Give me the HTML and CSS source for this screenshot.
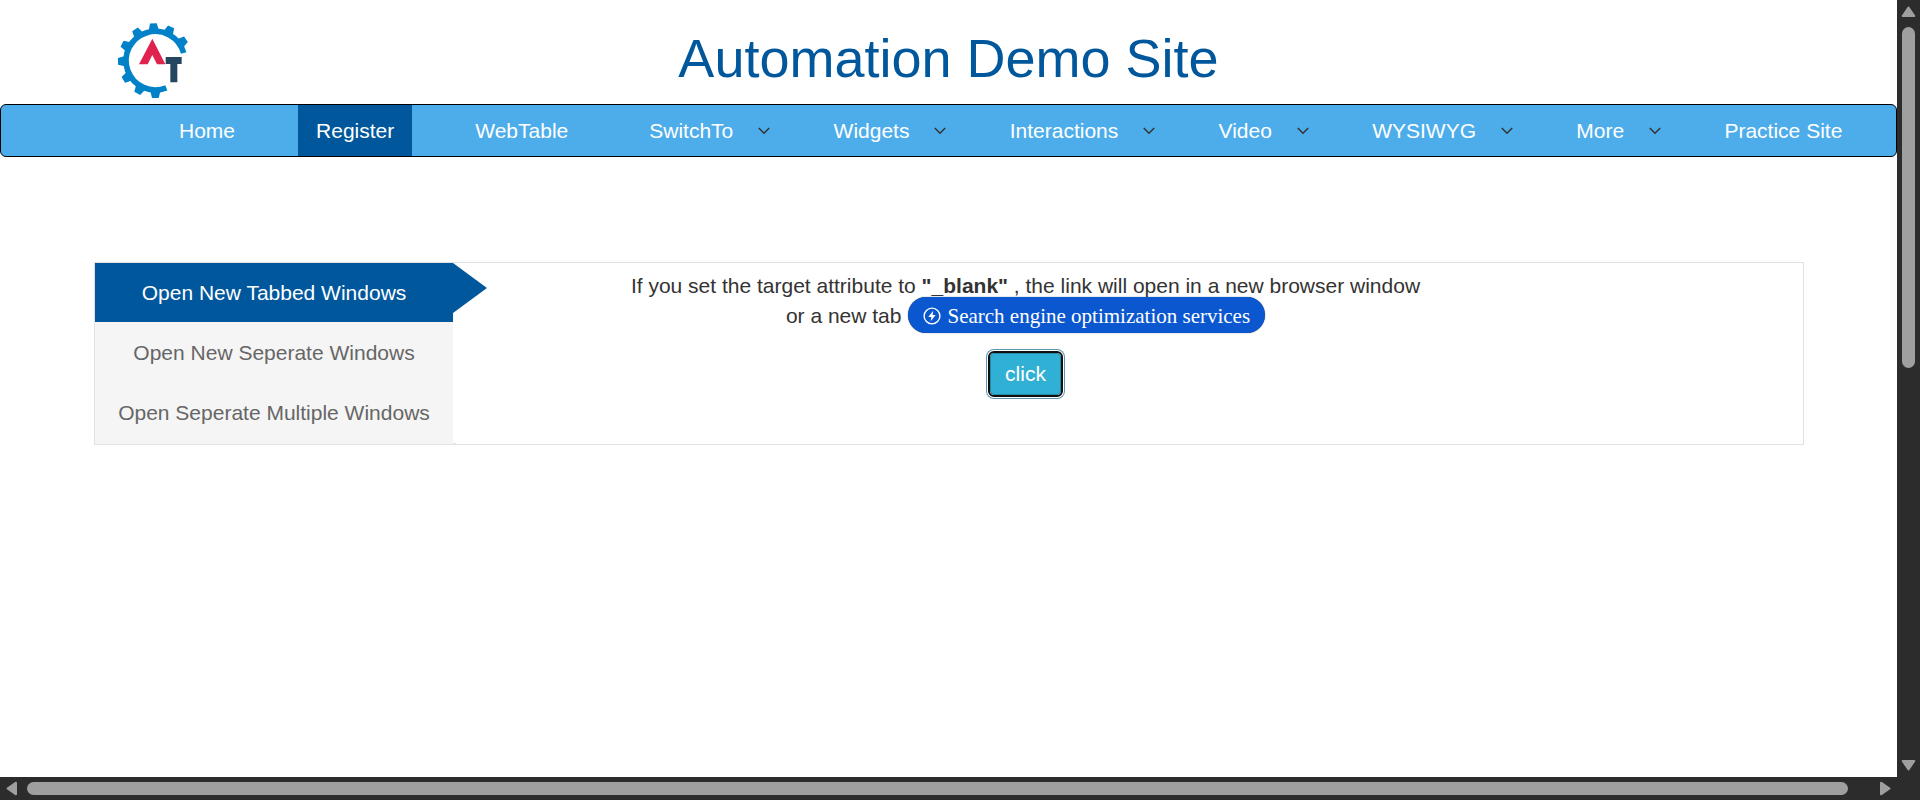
FILE: index.html
```html
<!DOCTYPE html>
<html lang="en">
<head>
<meta charset="utf-8">
<title>Automation Demo Site</title>
<link rel="stylesheet" href="styles.css">
</head>
<body>
<svg class="defs" width="0" height="0">
  <symbol id="chev" viewBox="0 0 12 8"><path d="M.8 1 6 6.2 11.2 1" fill="none" stroke="#333" stroke-width="1.5"/></symbol>
</svg>
<div class="page">
  <header class="header">
    <svg class="logo" viewBox="108 66 219 231">
      <path d="M311 159A88 88 0 1 0 259 263.6" fill="none" stroke="#0081c8" stroke-width="17"/>
      <g fill="#0081c8">
        <path id="tooth" d="M314 166 338 172V192L314 198Z" transform="rotate(-93 226 182)"/>
        <use href="#tooth" transform="rotate(28 226 182)"/>
        <use href="#tooth" transform="rotate(58 226 182)"/>
        <use href="#tooth" transform="rotate(-30 226 182)"/>
        <use href="#tooth" transform="rotate(-60 226 182)"/>
        <use href="#tooth" transform="rotate(-88 226 182)"/>
        <use href="#tooth" transform="rotate(-118 226 182)"/>
        <use href="#tooth" transform="rotate(-148 226 182)"/>
        <use href="#tooth" transform="rotate(-177 226 182)"/>
      </g>
      <path d="M217 116 256 193H231L217 165 203 193H177Z" fill="#e0234e"/>
      <path d="M257 171H305V192H292V247H271V192H257Z" fill="#24475f"/>
    </svg>
    <h1 class="title">Automation Demo Site</h1>
  </header>
  <nav class="nav">
    <a class="link">Home</a>
    <a class="link active">Register</a>
    <a class="link">WebTable</a>
    <div class="drop"><a class="link">SwitchTo</a><svg class="chev"><use href="#chev"/></svg></div>
    <div class="drop"><a class="link">Widgets</a><svg class="chev"><use href="#chev"/></svg></div>
    <div class="drop"><a class="link">Interactions</a><svg class="chev"><use href="#chev"/></svg></div>
    <div class="drop"><a class="link">Video</a><svg class="chev"><use href="#chev"/></svg></div>
    <div class="drop"><a class="link">WYSIWYG</a><svg class="chev"><use href="#chev"/></svg></div>
    <div class="drop"><a class="link">More</a><svg class="chev"><use href="#chev"/></svg></div>
    <a class="link">Practice Site</a>
  </nav>
  <main class="panel">
    <div class="tabs">
      <a class="tab current">Open New Tabbed Windows</a>
      <a class="tab">Open New Seperate Windows</a>
      <a class="tab">Open Seperate Multiple Windows</a>
    </div>
    <section class="content">
      <p class="text">If you set the target attribute to <b>"_blank"</b> , the link will open in a new browser window</p>
      <div class="row">
        <span class="text">or a new tab</span>
        <a class="pill"><svg class="bolt" viewBox="0 0 18 18"><circle cx="9" cy="9" r="7.9" fill="none" stroke="#fff" stroke-width="1.4"/><path d="M10.2 3.8 5.3 10H8.3L7.7 14.2 12.6 8H9.6Z" fill="#fff"/></svg>Search engine optimization services</a>
      </div>
      <button class="click">click</button>
    </section>
  </main>
</div>
<div class="vbar">
  <svg class="arrow" viewBox="0 0 15 12"><path d="M7.5 1.5 13.3 10H1.7Z"/></svg>
  <div class="vthumb"></div>
  <svg class="arrow down" viewBox="0 0 15 12"><path d="M7.5 10.5 13.3 2H1.7Z"/></svg>
</div>
<div class="hbar">
  <svg class="side" viewBox="0 0 12 15"><path d="M1.5 7.5 10 1.7V13.3Z"/></svg>
  <div class="hthumb"></div>
  <svg class="side right" viewBox="0 0 12 15"><path d="M10.5 7.5 2 1.7V13.3Z"/></svg>
</div>
</body>
</html>
```
FILE: styles.css
```css
* { box-sizing: border-box; }
body {
  margin: 0;
  width: 1920px;
  height: 800px;
  overflow: hidden;
  display: grid;
  grid-template: 777px 23px / 1897px 23px;
  background: #fff;
  color: #333;
  font: 21px/30px "Liberation Sans", Arial, sans-serif;
}
.defs { position: absolute; }
.page { overflow: hidden; }
.header {
  height: 104px;
  display: grid;
  grid-template-columns: 189px 1fr 189px;
}
.logo { width: 73px; height: 77px; margin: 22px 0 0 116px; }
.title {
  margin: 29px 0 0;
  text-align: center;
  font-size: 54px;
  line-height: 59px;
  font-weight: 400;
  color: #00579c;
}
.nav {
  height: 53px;
  display: flex;
  gap: 45px;
  padding-left: 160px;
  background: #4dadeb;
  border: 1px solid #000;
  border-radius: 6px;
  white-space: nowrap;
}
.link { padding: 11px 18px 0; color: #fff; }
.active { background: #00579c; }
.drop { display: flex; align-items: flex-start; }
.chev { width: 12px; height: 8px; margin: 22px .6px 0 6.7px; }
.panel {
  width: 1710px;
  height: 183px;
  margin: 105px 0 0 94px;
  display: flex;
  border: 1px solid #e2e2e2;
}
.tabs {
  position: relative;
  width: 358px;
  background: #f5f5f5;
  text-align: center;
}
.tabs::after {
  content: "";
  position: absolute;
  left: 358px;
  bottom: 0;
  width: 3px;
  height: 1px;
  background: #e2e2e2;
}
.tab { display: block; height: 60px; line-height: 62px; color: #666; }
.current {
  position: relative;
  height: 59px;
  line-height: 60px;
  background: #00579c;
  color: #fff;
}
.current::after {
  content: "";
  position: absolute;
  left: 358px;
  top: 0;
  border: solid transparent;
  border-width: 25px 0 25px 34px;
  border-left-color: #00579c;
}
.content {
  width: 1145px;
  padding-top: 8px;
  display: flex;
  flex-direction: column;
  align-items: center;
}
.text { margin: 0; white-space: nowrap; }
.row { height: 30px; display: flex; align-items: center; gap: 7px; }
.pill {
  height: 36px;
  display: flex;
  align-items: center;
  padding: 1px 15px 0;
  border-radius: 18px;
  background: #0b57d0;
  box-shadow: 0 0 1px #333;
  color: #fff;
  font-family: "Liberation Serif", "Times New Roman", serif;
  white-space: nowrap;
  margin-top: -2px;
}
.bolt { width: 18px; height: 18px; margin: 1px 6px 0 0; }
.click {
  width: 71px;
  height: 42px;
  margin-top: 22px;
  padding: 0;
  border: 1px solid #238ba7;
  border-radius: 4px;
  outline: 2px solid #101010;
  box-shadow: 0 0 0 3px #fff, 0 0 0 4px #5d96ad;
  background: #31b0d5;
  color: #fff;
  font: inherit;
}
.vbar, .hbar { background: #2c2c2c; display: flex; }
.vbar { flex-direction: column; align-items: center; }
.hbar { grid-column: 1 / 3; align-items: center; }
.arrow { width: 15px; height: 12px; margin-top: 6px; }
.side { width: 12px; height: 15px; margin-left: 6px; }
.arrow, .side { fill: #9f9f9f; stroke: #9f9f9f; stroke-width: 2; stroke-linejoin: round; }
.vthumb { width: 13px; height: 341px; margin-top: 9px; border-radius: 7px; background: #9f9f9f; }
.down { margin-top: 391px; }
.hthumb { width: 1821px; height: 13px; margin-left: 9px; border-radius: 7px; background: #9f9f9f; }
.right { margin-left: 31px; }
```
